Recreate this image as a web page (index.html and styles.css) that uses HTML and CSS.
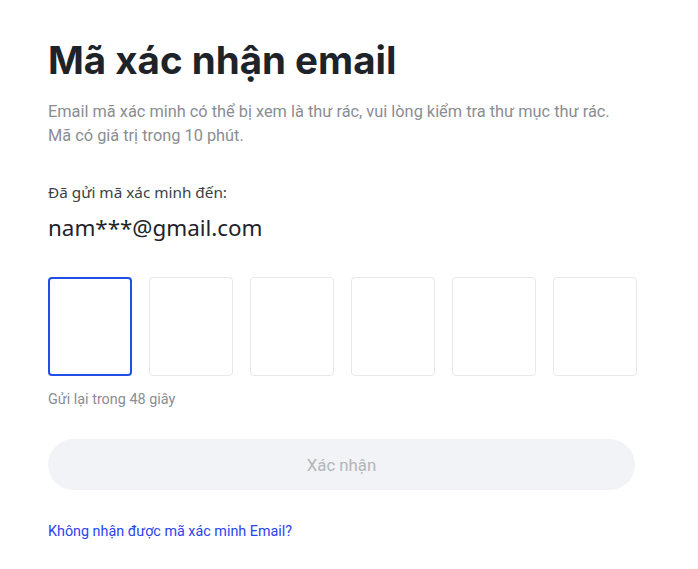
FILE: index.html
```html
<!DOCTYPE html>
<html lang="vi">
<head>
<meta charset="utf-8">
<link rel="stylesheet" href="styles.css">
</head>
<body>
<div class="page">
  <h1 class="title">Mã xác nhận email</h1>
  <p class="desc">Email mã xác minh có thể bị xem là thư rác, vui lòng kiểm tra thư mục thư rác.<br>Mã có giá trị trong 10 phút.</p>
  <div class="sent-label">Đã gửi mã xác minh đến:</div>
  <div class="email">nam***@gmail.com</div>
  <div class="codes">
    <div class="code active"></div>
    <div class="code"></div>
    <div class="code"></div>
    <div class="code"></div>
    <div class="code"></div>
    <div class="code"></div>
  </div>
  <div class="resend">Gửi lại trong 48 giây</div>
  <button class="submit">Xác nhận</button>
  <a class="help" href="#">Không nhận được mã xác minh Email?</a>
</div>
</body>
</html>
```
FILE: styles.css
```css
* { box-sizing: border-box; }
html, body { margin: 0; padding: 0; background: #fff; }
body { font-family: "Noto Sans", "Open Sans", sans-serif; color: #1e2329; }
.page {
  width: 590px;
  margin-left: 48px;
  padding-top: 34px;
  display: flex;
  flex-direction: column;
}
.title {
  margin: 0;
  font-family: Inter, "Noto Sans", sans-serif;
  font-size: 38.5px;
  font-weight: 700;
  line-height: 52px;
  color: #1e2329;
  letter-spacing: 0;
}
.desc {
  margin: 14px 0 0;
  font-family: Roboto, "Noto Sans", sans-serif;
  font-size: 16.35px;
  line-height: 24px;
  color: #8a8d93;
}
.sent-label {
  margin-top: 33px;
  font-size: 15.3px;
  line-height: 22px;
  color: #3a3f45;
}
.email {
  margin-top: 10px;
  font-size: 22.4px;
  line-height: 30px;
  color: #1e2329;
}
.codes {
  margin-top: 34px;
  display: flex;
  gap: 17px;
}
.code {
  width: 84px;
  height: 99px;
  border: 1px solid #e6e8ea;
  border-radius: 4px;
}
.code.active {
  border: 2px solid #1f4fe6;
}
.resend {
  margin-top: 14px;
  font-family: Roboto, "Noto Sans", sans-serif;
  font-size: 14.4px;
  line-height: 20px;
  color: #8a8d93;
}
.submit {
  margin-top: 29px;
  width: 587px;
  height: 51px;
  border: none;
  border-radius: 26px;
  background: #f2f3f6;
  color: #b3b5b8;
  font-family: Roboto, "Noto Sans", sans-serif;
  font-size: 16.8px;
  font-weight: 400;
}
.help {
  margin-top: 32px;
  font-family: Roboto, "Noto Sans", sans-serif;
  font-size: 14.35px;
  line-height: 20px;
  color: #2a43f0;
  text-decoration: none;
  align-self: flex-start;
}
```
